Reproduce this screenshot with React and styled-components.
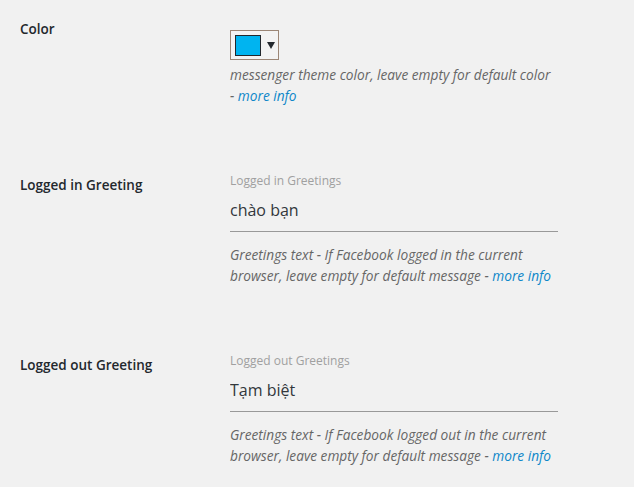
import React from "react";
import styled, { createGlobalStyle } from "styled-components";

const GlobalStyle = createGlobalStyle`
  html, body {
    margin: 0;
    padding: 0;
    background: #f1f1f1;
  }
  body {
    font-family: "Open Sans", "Noto Sans", sans-serif;
    color: #444;
  }
`;

const Table = styled.div`
  padding-left: 20px;
`;

const Row = styled.div`
  display: grid;
  grid-template-columns: 210px 328px;
  padding-bottom: 50px;

  &:last-child {
    padding-bottom: 20px;
  }
`;

const Label = styled.div`
  padding-top: 20px;
  font-size: 13.5px;
  line-height: 18px;
  font-weight: 600;
  color: #23282d;
`;

const Field = styled.div`
  padding-top: ${({ $top }) => $top}px;
`;

const ColorButton = styled.button`
  display: flex;
  align-items: center;
  gap: 6px;
  box-sizing: border-box;
  width: 49px;
  height: 30px;
  padding: 0 0 0 4px;
  border: 1px solid #9c8676;
  background: #f3f3f3;
  cursor: pointer;
`;

const Swatch = styled.span`
  display: block;
  box-sizing: border-box;
  width: 26px;
  height: 21px;
  background: ${({ $color }) => $color};
  border: 1px solid #23282d;
`;

const Caret = styled.span`
  width: 0;
  height: 0;
  border-left: 4px solid transparent;
  border-right: 4px solid transparent;
  border-top: 7px solid #23282d;
`;

const SmallLabel = styled.div`
  font-size: 12px;
  line-height: 17px;
  color: #a0a0a0;
`;

const Input = styled.input`
  display: block;
  box-sizing: border-box;
  width: 100%;
  height: 41px;
  margin-top: 2px;
  padding: 0 0 2px;
  border: none;
  border-bottom: 1px solid #999;
  background: transparent;
  font-family: inherit;
  font-size: 16px;
  color: #32373c;
  outline: none;
`;

const Description = styled.p`
  margin: ${({ $top }) => $top}px 0 0;
  font-size: 13.7px;
  line-height: 21px;
  font-style: italic;
  color: #666;
`;

const MoreLink = styled.a`
  color: #0e87c9;
  text-decoration: none;
`;

const GreetingRow = ({ label, small, value, phrase }) => (
  <Row>
    <Label>{label}</Label>
    <Field $top={16}>
      <SmallLabel>{small}</SmallLabel>
      <Input defaultValue={value} />
      <Description $top={12}>
        Greetings text - If Facebook {phrase} the current browser, leave empty
        for default message - <MoreLink href="#">more info</MoreLink>
      </Description>
    </Field>
  </Row>
);

export default function App() {
  return (
    <>
      <GlobalStyle />
      <Table>
        <Row>
          <Label>Color</Label>
          <Field $top={30}>
            <ColorButton type="button">
              <Swatch $color="#00b4f0" />
              <Caret />
            </ColorButton>
            <Description $top={4}>
              messenger theme color, leave empty for default color
              <br />- <MoreLink href="#">more info</MoreLink>
            </Description>
          </Field>
        </Row>
        <GreetingRow
          label="Logged in Greeting"
          small="Logged in Greetings"
          value="chào bạn"
          phrase="logged in"
        />
        <GreetingRow
          label="Logged out Greeting"
          small="Logged out Greetings"
          value="Tạm biệt"
          phrase="logged out in"
        />
      </Table>
    </>
  );
}
